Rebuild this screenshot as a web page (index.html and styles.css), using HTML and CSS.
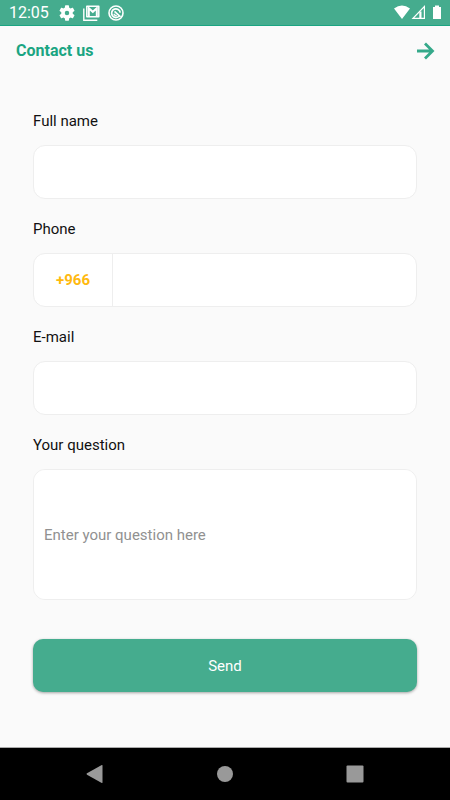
FILE: index.html
```html
<!DOCTYPE html>
<html lang="en">
<head>
<meta charset="utf-8">
<meta name="viewport" content="width=device-width, initial-scale=1">
<title>Contact us</title>
<link rel="stylesheet" href="styles.css">
</head>
<body>
<div class="status">
  <span class="clock">12:05</span>
  <div class="notices">
    <svg width="16" height="16" viewBox="2 2 20 20" aria-hidden="true"><path fill="currentColor" d="M19.14 12.94c.04-.3.06-.61.06-.94s-.02-.64-.07-.94l2.03-1.58a.49.49 0 0 0 .12-.61l-1.92-3.32a.49.49 0 0 0-.59-.22l-2.39.96a7 7 0 0 0-1.62-.94l-.36-2.54a.48.48 0 0 0-.48-.41h-3.84a.48.48 0 0 0-.47.41l-.36 2.54c-.59.24-1.13.57-1.62.94l-2.39-.96a.48.48 0 0 0-.59.22L2.74 8.87a.48.48 0 0 0 .12.61l2.03 1.58a6 6 0 0 0 0 1.88l-2.03 1.58a.49.49 0 0 0-.12.61l1.92 3.32c.12.22.37.29.59.22l2.39-.96c.5.38 1.03.7 1.62.94l.36 2.54c.05.24.24.41.48.41h3.84c.24 0 .44-.17.47-.41l.36-2.54a7 7 0 0 0 1.62-.94l2.39.96c.22.08.47 0 .59-.22l1.92-3.32a.48.48 0 0 0-.12-.61zM12 14.8a2.8 2.8 0 1 1 0-5.6 2.8 2.8 0 0 1 0 5.6z"/></svg>
    <svg width="17" height="16" viewBox="0 0 17 16" aria-hidden="true"><path fill="none" stroke="currentColor" stroke-width="1.4" d="M.8 3.5v11.700h13.500"/><path fill="none" stroke="currentColor" stroke-width="1.500" stroke-linejoin="round" d="M3.800 1.200h12v10.600h-12z"/><path fill="none" stroke="currentColor" stroke-width="2" d="M5.800 11.500V3.200l4 3.600 4-3.600v8.300"/></svg>
    <svg width="16" height="16" viewBox="0 0 16 16" fill="none" stroke="currentColor" aria-hidden="true"><circle cx="8" cy="8" r="7" stroke-width="1.600"/><path stroke-width="1.800" d="M11.200 11A4.300 4.300 0 1 1 12.200 7.600M6.500 6.300l6 5.500"/><path stroke-width="1.300" d="M5.800 8.800a2.700 2.700 0 0 0 3 1.700"/></svg>
  </div>
  <svg class="signals" width="48" height="16" viewBox="0 0 48 16" aria-hidden="true"><path fill="currentColor" d="M0 3.500Q8-2.500 16 3.500L8 14zM31 0v14H17.500zM39 2h2V.500h4V2h2v12h-8z"/><path class="signal-cutout" d="M29.800 3v9.800H20.400z"/><path fill="currentColor" d="M25.300 6.500h2.200v6.500h-2.200z"/></svg>
</div>
<header class="bar">
  <h1 class="title">Contact us</h1>
  <button class="next" type="button" aria-label="Back">
    <svg width="18" height="18" viewBox="0 0 18 18" aria-hidden="true"><path fill="none" stroke="currentColor" stroke-width="2.800" d="M0 9h15M8 1.500 15.500 9 8 16.500"/></svg>
  </button>
</header>
<form class="form">
  <div class="field">
    <label class="label" for="name">Full name</label>
    <input class="box" id="name" type="text">
  </div>
  <div class="field">
    <label class="label" for="phone">Phone</label>
    <div class="box phone">
      <span class="prefix">+966</span>
      <input class="number" id="phone" type="tel">
    </div>
  </div>
  <div class="field">
    <label class="label" for="email">E-mail</label>
    <input class="box" id="email" type="email">
  </div>
  <div class="field">
    <label class="label" for="question">Your question</label>
    <textarea class="box question" id="question" placeholder="Enter your question here"></textarea>
  </div>
  <button class="send" type="submit">Send</button>
</form>
<nav class="system">
  <button class="key" type="button" aria-label="System back"><svg width="18" height="18" viewBox="0 0 18 18"><path fill="currentColor" d="M16.500.2v17.600q-.6.300-1.200 0L1 9.700q-.8-.7 0-1.400L15.300.2q.6-.3 1.200 0z"/></svg></button>
  <button class="key" type="button" aria-label="Home"><svg width="18" height="18" viewBox="0 0 18 18"><circle cx="9" cy="9" r="8" fill="currentColor"/></svg></button>
  <button class="key" type="button" aria-label="Recent apps"><svg width="18" height="18" viewBox="0 0 18 18"><rect x=".5" y=".5" width="17" height="17" rx="1" fill="currentColor"/></svg></button>
</nav>
</body>
</html>
```
FILE: styles.css
```css
:root {
  --green: #45ac8e;
  --green-deep: #1aa582;
  --line: #eeeeee;
}

* {
  box-sizing: border-box;
}

body {
  margin: 0;
  min-height: 100vh;
  display: flex;
  flex-direction: column;
  background: #fafafa;
  color: #111;
  font: 15px/24px Roboto, sans-serif;
}

button,
input,
textarea {
  margin: 0;
  padding: 0;
  border: 0;
  background: none;
  color: inherit;
  font: inherit;
}

svg {
  display: block;
}

.status {
  display: flex;
  align-items: center;
  height: 26px;
  padding: 1px 8px 0 9px;
  background: var(--green);
  border-bottom: 1px solid var(--green-deep);
  color: #fff;
}

.clock {
  font-size: 16px;
}

.notices {
  display: flex;
  gap: 8px;
  margin-left: 10px;
}

.signals {
  margin-left: auto;
}

.signal-cutout {
  fill: var(--green);
}

.bar {
  display: flex;
  align-items: center;
  justify-content: space-between;
  height: 50px;
  padding: 0 15px 0 16px;
  color: var(--green-deep);
}

.title {
  margin: 0;
  font-size: 16px;
  font-weight: 700;
}

.next {
  color: #35a98a;
}

.form {
  flex: 1;
  display: flex;
  flex-direction: column;
  gap: 18px;
  padding: 33px 33px 54px;
}

.field {
  display: flex;
  flex-direction: column;
  gap: 12px;
}

.box {
  width: 100%;
  height: 54px;
  padding: 0 10px;
  border: 1px solid var(--line);
  border-radius: 12px;
  background: #fff;
}

.phone {
  display: flex;
  padding: 0;
}

.prefix {
  display: flex;
  align-items: center;
  justify-content: center;
  width: 79px;
  border-right: 1px solid var(--line);
  color: #ffb90f;
  font-weight: 700;
}

.number {
  flex: 1;
  min-width: 0;
  padding: 0 10px;
}

.question {
  display: block;
  height: 131px;
  padding: 53px 10px;
  resize: none;
}

.question::placeholder {
  color: #919191;
  opacity: 1;
}

.send {
  height: 53px;
  margin-top: 21px;
  border-radius: 10px;
  background: var(--green);
  box-shadow: 0 1px 3px rgb(0 0 0 / 35%);
  color: #fff;
}

.system {
  display: flex;
  justify-content: space-around;
  align-items: center;
  height: 53px;
  padding: 0 30px;
  border-top: 1px solid #aaa;
  background: #000;
  color: #999;
}
```
